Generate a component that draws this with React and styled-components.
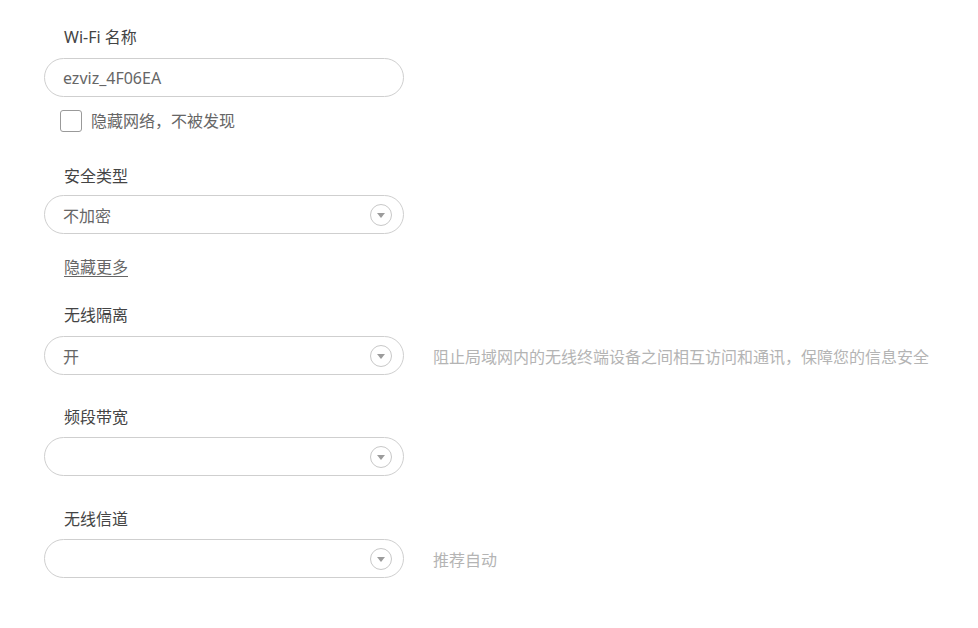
import React from 'react'
import styled, { createGlobalStyle } from 'styled-components'

const GlobalStyle = createGlobalStyle`
  html, body {
    margin: 0;
    padding: 0;
    background: #fff;
  }
  body {
    font-family: "Noto Sans", "Noto Sans CJK SC", sans-serif;
    font-size: 16px;
  }
`

const StyledPage = styled.div`
  padding: 27px 0 0 44px;
  width: 934px;
  box-sizing: border-box;
`

const StyledGroup = styled.div`
  display: flex;
  flex-direction: column;
  margin-bottom: ${props => props.gap || 0}px;
`

const StyledLabel = styled.div`
  height: 20px;
  line-height: 20px;
  padding-left: 20px;
  margin-bottom: ${props => props.space || 10}px;
  color: #444;
  font-size: 16px;
`

const StyledRow = styled.div`
  display: flex;
  align-items: center;
  gap: 29px;
`

const StyledInput = styled.input`
  width: 360px;
  height: 39px;
  box-sizing: border-box;
  border: 1px solid #cfcfcf;
  border-radius: 20px;
  padding: 0 18px;
  font-family: "Noto Sans", "Noto Sans CJK SC", sans-serif;
  font-size: 16px;
  color: #666;
  outline: none;
`

const StyledSelect = styled.div`
  width: 360px;
  height: 39px;
  box-sizing: border-box;
  border: 1px solid #cfcfcf;
  border-radius: 20px;
  padding: 0 11px 0 18px;
  display: flex;
  align-items: center;
  justify-content: space-between;
  color: #666;
  font-size: 16px;
`

const StyledArrow = styled.span`
  width: 22px;
  height: 22px;
  box-sizing: border-box;
  border: 1px solid #c8c8c8;
  border-radius: 50%;
  display: flex;
  align-items: center;
  justify-content: center;

  &::after {
    content: '';
    margin-top: 2px;
    border-left: 4px solid transparent;
    border-right: 4px solid transparent;
    border-top: 5px solid #9c9c9c;
  }
`

const StyledHint = styled.span`
  color: #b4b4b4;
  font-size: 16px;
  white-space: nowrap;
`

const StyledCheck = styled.label`
  display: flex;
  align-items: center;
  gap: 9px;
  margin: 13px 0 0 16px;
  color: #666;
  font-size: 16px;
  line-height: 22px;
`

const StyledBox = styled.span`
  width: 22px;
  height: 22px;
  box-sizing: border-box;
  border: 1px solid #9a9a9a;
  border-radius: 3px;
  background: #fff;
`

const StyledMore = styled.a`
  display: block;
  height: 20px;
  line-height: 20px;
  padding-left: 20px;
  color: #666;
  text-decoration: underline;
  text-underline-offset: 3px;
  font-size: 16px;
  cursor: pointer;
`

const Select = ({ value, hint }) => (
  <StyledRow>
    <StyledSelect>
      <span>{value}</span>
      <StyledArrow />
    </StyledSelect>
    {hint && <StyledHint>{hint}</StyledHint>}
  </StyledRow>
)

export default function App() {
  return (
    <StyledPage>
      <GlobalStyle />
      <StyledGroup gap={34}>
        <StyledLabel space={11}>Wi-Fi 名称</StyledLabel>
        <StyledRow>
          <StyledInput defaultValue="ezviz_4F06EA" />
        </StyledRow>
        <StyledCheck>
          <StyledBox />
          隐藏网络，不被发现
        </StyledCheck>
      </StyledGroup>

      <StyledGroup gap={23}>
        <StyledLabel space={9}>安全类型</StyledLabel>
        <Select value="不加密" />
      </StyledGroup>

      <StyledGroup gap={28}>
        <StyledMore>隐藏更多</StyledMore>
      </StyledGroup>

      <StyledGroup gap={32}>
        <StyledLabel space={11}>无线隔离</StyledLabel>
        <Select value="开" hint="阻止局域网内的无线终端设备之间相互访问和通讯，保障您的信息安全" />
      </StyledGroup>

      <StyledGroup gap={33}>
        <StyledLabel>频段带宽</StyledLabel>
        <Select value="" />
      </StyledGroup>

      <StyledGroup>
        <StyledLabel>无线信道</StyledLabel>
        <Select value="" hint="推荐自动" />
      </StyledGroup>
    </StyledPage>
  )
}
